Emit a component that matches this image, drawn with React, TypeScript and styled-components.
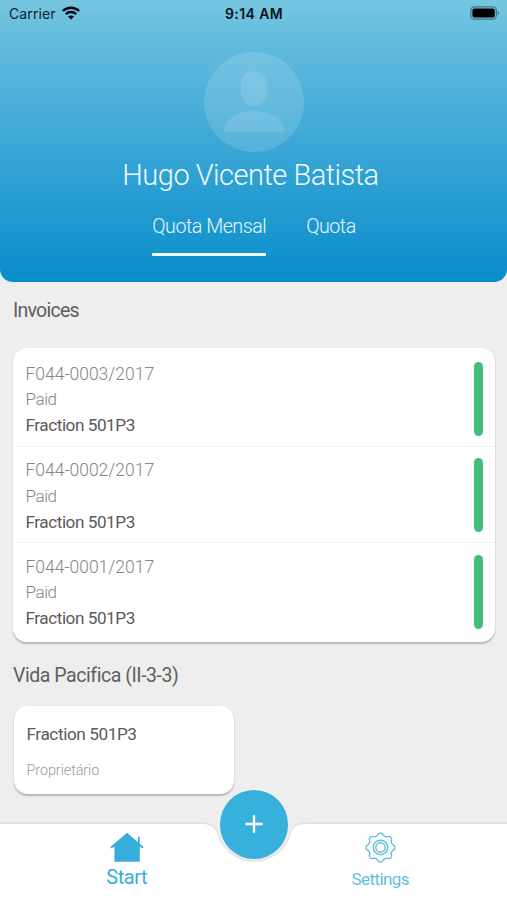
import React from "react";
import styled, { createGlobalStyle } from "styled-components";

const GlobalStyle = createGlobalStyle`
  * { box-sizing: border-box; }
  body { margin: 0; background: #eeeeee; }
`;

const Screen = styled.div`
  position: relative;
  width: 507px;
  height: 900px;
  overflow: hidden;
  display: flex;
  flex-direction: column;
  background: #eeeeee;
  font-family: Roboto, "Open Sans", sans-serif;
  font-variant-ligatures: none;
  color: #5e5e5e;
`;

const Header = styled.header`
  height: 282px;
  flex: none;
  display: flex;
  flex-direction: column;
  align-items: center;
  border-radius: 0 0 13px 13px;
  background: linear-gradient(180deg, #76c6e0 0, #5fb9dc 52px, #3da8d6 140px, #088dcb 282px);
`;

const StatusBar = styled.div`
  width: 100%;
  height: 28px;
  padding: 0 7px 0 9px;
  display: grid;
  grid-template-columns: 1fr auto 1fr;
  align-items: center;
  font-family: Inter, sans-serif;
  font-size: 14px;
  color: #0b222c;
`;

const Carrier = styled.div`
  display: flex;
  align-items: center;
  gap: 6px;
  line-height: 15px;
  padding-bottom: 2px;
  letter-spacing: 0.1px;
`;

const Clock = styled.div`
  font-weight: 600;
  color: #07141a;
  padding: 0 1px 2px 0;
  letter-spacing: 0.4px;
`;

const Battery = styled.svg`
  justify-self: end;
  margin-bottom: 2px;
`;

const Avatar = styled.svg`
  margin-top: 24px;
  flex: none;
`;

const Label = styled.span<{ $size: number; $weight?: number; $track?: number; $line: number }>`
  display: block;
  white-space: nowrap;
  font-size: ${(p) => p.$size}px;
  font-weight: ${(p) => p.$weight ?? 400};
  letter-spacing: ${(p) => p.$track ?? 0}px;
  line-height: ${(p) => p.$line}px;
`;

const Name = styled(Label)`
  margin: 5px 6px 0 0;
  color: #effaff;
`;

const Tabs = styled.nav`
  display: flex;
  gap: 40px;
  margin: 17px 0 0 1px;
`;

const Tab = styled.div<{ $active?: boolean }>`
  height: 46px;
  color: #e6f6fd;
  border-bottom: 3px solid ${(p) => (p.$active ? "#f3fbff" : "transparent")};
  border-radius: 1px;
`;

const Content = styled.main`
  padding: 14px 12px 0 13px;
  display: flex;
  flex-direction: column;
  align-items: flex-start;
`;

const Card = styled.section`
  background: #fff;
  border-radius: 14px;
  box-shadow: 0 1.5px 2px rgba(0, 0, 0, 0.24);
`;

const InvoiceList = styled(Card)`
  width: 100%;
  height: 294px;
  margin: 22px 0 19px;
  padding-top: 2px;
`;

const Invoice = styled.article`
  height: 96.5px;
  padding: 11.5px 12px 9.5px 12.5px;
  display: flex;
  justify-content: space-between;
  border-bottom: 1px solid #f1f1f1;
  &:last-child { border-bottom-color: transparent; }
`;

const Lines = styled.div`
  color: #858585;
`;

const Strong = styled(Label)`
  color: #5a5a5a;
`;

const PaidBar = styled.div`
  width: 9px;
  height: 74px;
  border-radius: 5px;
  background: #43bd7e;
`;

const FractionCard = styled(Card)`
  width: 220px;
  height: 88px;
  margin: 15px 0 0 1px;
  padding: 15px 12.5px;
`;

const Role = styled(Label)`
  margin-top: 13px;
  color: #9b9b9b;
`;

const BottomBar = styled.footer`
  position: absolute;
  left: 0;
  bottom: 0;
  width: 507px;
  height: 80px;
`;

const BarShape = styled.svg`
  position: absolute;
  left: 0;
  top: 0;
  display: block;
`;

const NavItems = styled.div`
  position: relative;
  height: 100%;
  display: grid;
  grid-template-columns: 1fr 1fr;
`;

const NavItem = styled.div<{ $active?: boolean }>`
  display: flex;
  flex-direction: column;
  align-items: center;
  padding-top: 12px;
  color: ${(p) => (p.$active ? "#38addb" : "#61bee0")};
  svg { flex: none; }
`;

const NavLabel = styled(Label)<{ $gap: number }>`
  margin-top: ${(p) => p.$gap}px;
`;

const AddButton = styled.button`
  position: absolute;
  left: 219.5px;
  top: -30px;
  width: 68.5px;
  height: 68.5px;
  border: 0;
  border-radius: 50%;
  padding: 0;
  background: #37b0dc;
  display: grid;
  place-items: center;
`;

const gearPath = (() => {
  const points: string[] = [];
  for (let i = 0; i < 240; i++) {
    const a = (i / 240) * Math.PI * 2;
    const wave = Math.tanh(1.2 * Math.cos(8 * a)) / Math.tanh(1.2);
    const r = 13.2 + 1.2 * wave;
    points.push(`${(15.5 + r * Math.sin(a)).toFixed(2)} ${(15.5 - r * Math.cos(a)).toFixed(2)}`);
  }
  return `M${points.join("L")}Z`;
})();

const WifiIcon = () => (
  <svg width="18" height="14" viewBox="0 0 18 14" fill="none" stroke="#03090c">
    <path d="M.9 5C5.5.6 12.5.6 17.1 5" strokeWidth="2.4" />
    <path d="M3.8 8.1C6.8 5.3 11.2 5.3 14.2 8.1" strokeWidth="2.3" />
    <path d="M9 13.4 6 10.6Q9 8.2 12 10.6Z" fill="#03090c" stroke="none" />
  </svg>
);

const invoices = ["F044-0003/2017", "F044-0002/2017", "F044-0001/2017"];

export default function App() {
  return (
    <>
      <GlobalStyle />
      <Screen>
        <Header>
          <StatusBar>
            <Carrier>Carrier <WifiIcon /></Carrier>
            <Clock>9:14 AM</Clock>
            <Battery width="30" height="14" viewBox="0 0 30 14">
              <rect x=".8" y=".8" width="25.6" height="12.4" rx="3.6" fill="none" stroke="#427583" strokeWidth="1.2" />
              <rect x="2.4" y="2.4" width="22.4" height="9.2" rx="2" fill="#000" />
              <path d="M27.6 4.7q3.2 2.3 0 4.6z" fill="#427583" />
            </Battery>
          </StatusBar>
          <Avatar width="100" height="100" viewBox="0 0 100 100">
            <circle cx="50" cy="50" r="50" fill="#fff" fillOpacity=".14" />
            <path d="M50 19.5c8.5 0 13 5.5 13 13v6c0 8.5-5 16-13 16s-13-7.5-13-16v-6c0-7.5 4.5-13 13-13Z" fill="#fff" fillOpacity=".12" />
            <path d="M20 80v-3c2-11 14-18 30-18s28 7 30 18v3Z" fill="#fff" fillOpacity=".12" />
          </Avatar>
          <Name $size={29} $weight={300} $track={-0.5} $line={36}>Hugo Vicente Batista</Name>
          <Tabs>
            <Tab $active><Label $size={19.7} $weight={300} $track={-0.5} $line={34}>Quota Mensal</Label></Tab>
            <Tab><Label $size={19.7} $weight={300} $track={-0.5} $line={34}>Quota</Label></Tab>
          </Tabs>
        </Header>
        <Content>
          <Label $size={19.5} $track={-0.75} $line={30}>Invoices</Label>
          <InvoiceList>
            {invoices.map((number) => (
              <Invoice key={number}>
                <Lines>
                  <Label $size={17.5} $weight={300} $line={25.8}>{number}</Label>
                  <Label $size={17} $weight={300} $track={-0.4} $line={25.8}>Paid</Label>
                  <Strong $size={17.2} $track={-0.47} $line={25.8}>Fraction 501P3</Strong>
                </Lines>
                <PaidBar />
              </Invoice>
            ))}
          </InvoiceList>
          <Label $size={19.5} $track={-0.45} $line={30}>Vida Pacifica (II-3-3)</Label>
          <FractionCard>
            <Strong $size={17.2} $track={-0.42} $line={26}>Fraction 501P3</Strong>
            <Role $size={14.5} $weight={300} $track={-0.12} $line={22}>Proprietário</Role>
          </FractionCard>
        </Content>
        <BottomBar>
          <BarShape width="507" height="80" viewBox="0 0 507 80">
            <defs>
              <filter id="edge" x="-5%" y="-20%" width="110%" height="140%">
                <feDropShadow dx="0" dy="-1" stdDeviation="1.3" floodColor="#000" floodOpacity=".1" />
              </filter>
            </defs>
            <path d="M-5 4H202C211 4 215 8 217 14A38.5 38.5 0 0 0 291 14C293 8 297 4 306 4H512V90H-5Z" fill="#fff" filter="url(#edge)" />
          </BarShape>
          <NavItems>
            <NavItem $active>
              <svg width="34" height="31" viewBox="0 0 34 31" fill="currentColor">
                <path d="M17 .8 28 10.2V4.7h1.7v7L33.6 15l-1 1.4-2.8-1.8V29.7H4.4V14.6L1.5 16.4.4 15Z" />
              </svg>
              <NavLabel $size={20} $track={-0.45} $line={26} $gap={1}>Start</NavLabel>
            </NavItem>
            <NavItem>
              <svg width="31" height="31" viewBox="0 0 31 31" fill="none" stroke="currentColor" strokeWidth="1.4">
                <path d={gearPath} />
                <circle cx="15.5" cy="15.5" r="7.2" />
                <circle cx="15.5" cy="15.5" r="4.7" />
              </svg>
              <NavLabel $size={17} $track={-0.55} $line={25} $gap={4}>Settings</NavLabel>
            </NavItem>
          </NavItems>
          <AddButton aria-label="Add">
            <svg width="18" height="18" viewBox="0 0 18 18" stroke="#fff" strokeWidth="2.3">
              <path d="M9 .3v17.4M.3 9h17.4" />
            </svg>
          </AddButton>
        </BottomBar>
      </Screen>
    </>
  );
}
